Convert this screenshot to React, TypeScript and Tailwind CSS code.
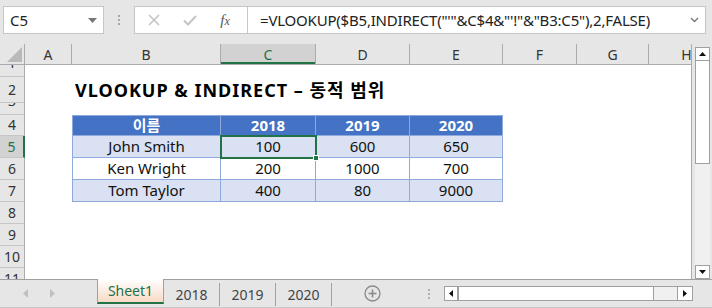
import React from "react";

const FONT = { fontFamily: '"Noto Sans", "Noto Sans CJK KR", sans-serif' };

const COLS = [
  { k: "A", w: 47 },
  { k: "B", w: 149 },
  { k: "C", w: 95 },
  { k: "D", w: 94 },
  { k: "E", w: 93 },
  { k: "F", w: 74 },
  { k: "G", w: 72 },
  { k: "H", w: 76 },
];

const ROW_H = [12, 26, 12, 21, 22, 22, 22, 22, 22, 22, 22];

const TABLE: Record<number, string[]> = {
  4: ["이름", "2018", "2019", "2020"],
  5: ["John Smith", "100", "600", "650"],
  6: ["Ken Wright", "200", "1000", "700"],
  7: ["Tom Taylor", "400", "80", "9000"],
};

function TopBar() {
  return (
    <div className="h-[44px] flex items-start pt-[6px] shrink-0">
      <div className="ml-[3px] w-[101px] h-[28px] bg-white border border-[#c6c6c6] flex items-center justify-between pl-[6px] pr-[6px]">
        <span className="text-[15px] text-[#222]">C5</span>
        <svg width="9" height="5" viewBox="0 0 9 5">
          <path d="M0 0 L9 0 L4.5 5 Z" fill="#777" />
        </svg>
      </div>
      <div className="w-[30px] h-[28px] flex flex-col items-center justify-center gap-[2px]">
        <div className="w-[2px] h-[2px] bg-[#a8a8a8]" />
        <div className="w-[2px] h-[2px] bg-[#a8a8a8]" />
        <div className="w-[2px] h-[2px] bg-[#a8a8a8]" />
      </div>
      <div className="w-[113px] h-[28px] bg-white border border-[#c6c6c6] border-r-0 flex items-center">
        <div className="w-[38px] flex justify-center">
          <svg width="12" height="12" viewBox="0 0 12 12">
            <path d="M1 1 L11 11 M11 1 L1 11" stroke="#c4c4c4" strokeWidth="1.6" />
          </svg>
        </div>
        <div className="w-[34px] flex justify-center">
          <svg width="14" height="11" viewBox="0 0 14 11">
            <path d="M1 5.5 L5 9.5 L13 1" stroke="#c4c4c4" strokeWidth="2" fill="none" />
          </svg>
        </div>
        <div className="w-[36px] flex justify-center">
          <span className="text-[15px] italic text-[#555]" style={{ fontFamily: '"Liberation Serif", serif' }}>
            f<span className="text-[12px]">x</span>
          </span>
        </div>
      </div>
      <div className="w-[459px] h-[28px] bg-white border border-[#c6c6c6] flex items-center justify-between pl-[12px] pr-[6px]">
        <span className="text-[15px] text-[#222] whitespace-nowrap tracking-[-0.2px]">
          =VLOOKUP($B5,INDIRECT("'"&amp;C$4&amp;"'!"&amp;"B3:C5"),2,FALSE)
        </span>
        <svg width="9" height="6" viewBox="0 0 9 6">
          <path d="M1 1 L4.5 4.5 L8 1" stroke="#777" strokeWidth="1.4" fill="none" />
        </svg>
      </div>
    </div>
  );
}

function ColHeader() {
  return (
    <div className="h-[21px] flex shrink-0 border-b border-[#ababab] bg-[#e6e6e6]">
      <div className="w-[25px] shrink-0 border-r border-[#ababab] flex items-end justify-end pr-[2px] pb-[2px]">
        <svg width="15" height="15" viewBox="0 0 15 15">
          <path d="M15 0 L15 15 L0 15 Z" fill="#b9b9b9" />
        </svg>
      </div>
      {COLS.map((c) => {
        const sel = c.k === "C";
        return (
          <div
            key={c.k}
            style={{ width: c.w }}
            className={
              "shrink-0 flex items-center justify-center text-[14px] border-r " +
              (sel
                ? "bg-[#d2d2d2] text-[#217346] border-[#ababab] shadow-[inset_0_-2px_0_#217346]"
                : "text-[#333] border-[#ababab]")
            }
          >
            {c.k}
          </div>
        );
      })}
    </div>
  );
}

function Row({ n, h }: { n: number; h: number }) {
  const sel = n === 5;
  const small = h < 15;
  const data = TABLE[n];
  return (
    <div className="flex shrink-0 overflow-hidden" style={{ height: h }}>
      <div
        className={
          "w-[25px] shrink-0 border-b border-[#c6c6c6] flex justify-center overflow-hidden text-[14px] " +
          (sel
            ? "bg-[#d2d2d2] text-[#217346] border-r-2 border-r-[#217346] items-center"
            : "bg-[#e6e6e6] text-[#333] border-r border-r-[#ababab] " + (small ? "items-end" : "items-center"))
        }
      >
        <span className={small ? "leading-[14px] mb-[6px]" : "leading-none"}>{n}</span>
      </div>
      <div className="shrink-0" style={{ width: COLS[0].w }} />
      {n === 2 && (
        <div className="flex items-center pl-[3px]">
          <span className="text-[18px] font-bold text-black whitespace-nowrap tracking-[1px]">
            VLOOKUP &amp; INDIRECT – 동적 범위
          </span>
        </div>
      )}
      {data &&
        data.map((t, i) => {
          const header = n === 4;
          const bg = header ? "bg-[#4472c4]" : n === 6 ? "bg-white" : "bg-[#d9e1f2]";
          return (
            <div
              key={i}
              style={{ width: COLS[i + 1].w }}
              className={
                "shrink-0 flex items-center justify-center text-[15px] border-r border-b border-[#8ea9db] " +
                bg +
                (i === 0 ? " border-l" : "") +
                (header ? " border-t font-bold text-white" : " text-[#111]")
              }
            >
              {t}
            </div>
          );
        })}
    </div>
  );
}

function Grid() {
  return (
    <div className="relative w-[692px] shrink-0 flex flex-col overflow-hidden bg-white border-r border-[#ababab]">
      <ColHeader />
      {ROW_H.map((h, i) => (
        <Row key={i} n={i + 1} h={h} />
      ))}
      <div className="absolute left-[220px] top-[91px] w-[97px] h-[24px] border-2 border-[#217346]" />
      <div className="absolute left-[313px] top-[111px] w-[6px] h-[6px] bg-[#217346] border border-white" />
    </div>
  );
}

function VScroll() {
  return (
    <div className="w-[20px] flex flex-col items-center pt-[3px] pb-0 bg-[#e6e6e6]">
      <div className="w-[15px] h-[14px] bg-white border border-[#a0a0a0] flex items-center justify-center">
        <svg width="7" height="4" viewBox="0 0 7 4">
          <path d="M0 4 L7 4 L3.5 0 Z" fill="#111" />
        </svg>
      </div>
      <div className="w-[15px] flex-1 bg-[#f0f0f0] flex flex-col">
        <div className="h-[103px] bg-white border border-[#a0a0a0] border-t-0" />
      </div>
      <div className="w-[15px] h-[14px] bg-white border border-[#a0a0a0] flex items-center justify-center">
        <svg width="7" height="4" viewBox="0 0 7 4">
          <path d="M0 0 L7 0 L3.5 4 Z" fill="#111" />
        </svg>
      </div>
    </div>
  );
}

function TabBar() {
  return (
    <div className="h-[29px] shrink-0 flex border-b border-[#c8c8c8] bg-[#e6e6e6]">
      <div className="w-[97px] shrink-0 border-t border-[#a0a0a0] flex items-center pl-[23px] gap-[22px]">
        <svg width="5" height="9" viewBox="0 0 5 9">
          <path d="M5 0 L5 9 L0 4.5 Z" fill="#c0c0c0" />
        </svg>
        <svg width="5" height="9" viewBox="0 0 5 9">
          <path d="M0 0 L0 9 L5 4.5 Z" fill="#c0c0c0" />
        </svg>
      </div>
      <div className="w-[67px] shrink-0 h-[25px] border-x border-[#a0a0a0] border-b-2 border-b-[#217346] bg-gradient-to-b from-white to-[#f8dac6] flex items-center justify-center text-[14px] text-[#217346]">
        Sheet1
      </div>
      <div className="flex-1 border-t border-[#a0a0a0] flex items-start">
        {["2018", "2019", "2020"].map((t) => (
          <div key={t} className="w-[56px] shrink-0 h-[23px] mt-[3px] flex items-center justify-center text-[14px] text-[#444] border-r border-[#a0a0a0]">
            {t}
          </div>
        ))}
        <div className="w-[112px] shrink-0 h-[27px] flex items-center pl-[32px]">
          <svg width="17" height="17" viewBox="0 0 17 17">
            <circle cx="8.5" cy="8.5" r="7.5" stroke="#8a8a8a" strokeWidth="1.3" fill="none" />
            <path d="M8.5 4.5 V12.5 M4.5 8.5 H12.5" stroke="#8a8a8a" strokeWidth="1.6" />
          </svg>
          <div className="ml-[47px] flex flex-col gap-[2px]">
            <div className="w-[2px] h-[2px] bg-[#b0b0b0]" />
            <div className="w-[2px] h-[2px] bg-[#b0b0b0]" />
            <div className="w-[2px] h-[2px] bg-[#b0b0b0]" />
          </div>
        </div>
        <div className="mt-[6px] w-[249px] h-[15px] flex border border-[#a0a0a0] bg-[#f0f0f0]">
          <div className="w-[14px] bg-white border-r-2 border-[#a0a0a0] flex items-center justify-center">
            <svg width="4" height="7" viewBox="0 0 4 7">
              <path d="M4 0 L4 7 L0 3.5 Z" fill="#111" />
            </svg>
          </div>
          <div className="w-[195px] bg-white border-r border-[#a0a0a0]" />
          <div className="flex-1" />
          <div className="w-[15px] bg-white border-l border-[#a0a0a0] flex items-center justify-center">
            <svg width="4" height="7" viewBox="0 0 4 7">
              <path d="M0 0 L0 7 L4 3.5 Z" fill="#111" />
            </svg>
          </div>
        </div>
      </div>
    </div>
  );
}

export default function App() {
  return (
    <div className="w-[712px] h-[308px] bg-[#e6e6e6] flex flex-col overflow-hidden" style={FONT}>
      <TopBar />
      <div className="flex h-[235px] shrink-0">
        <Grid />
        <VScroll />
      </div>
      <TabBar />
    </div>
  );
}
